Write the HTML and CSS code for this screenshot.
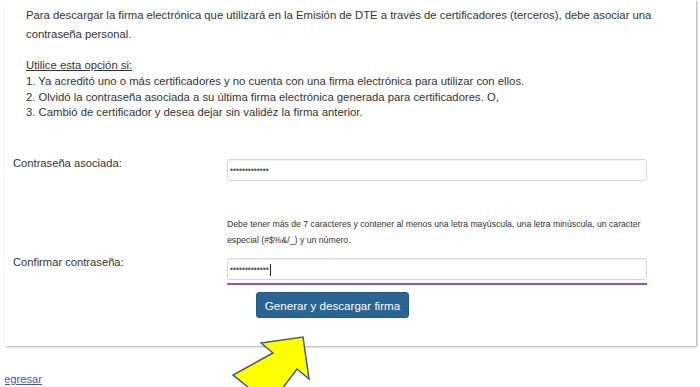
FILE: index.html
```html
<!DOCTYPE html>
<html lang="es">
<head>
<meta charset="utf-8">
<link rel="stylesheet" href="styles.css">
</head>
<body>
<div class="card">
  <div class="intro">
    <p class="lead">Para descargar la firma electrónica que utilizará en la Emisión de DTE a través de certificadores (terceros), debe asociar una contraseña personal.</p>
    <p class="opts"><span class="u">Utilice esta opción si:</span><br>1. Ya acreditó uno o más certificadores y no cuenta con una firma electrónica para utilizar con ellos.<br>2. Olvidó la contraseña asociada a su última firma electrónica generada para certificadores. O,<br>3. Cambió de certificador y desea dejar sin validéz la firma anterior.</p>
  </div>
  <div class="form">
    <div class="row r1">
      <label class="lbl">Contraseña asociada:</label>
      <div class="field"><div class="input">•••••••••••••</div></div>
    </div>
    <div class="help">Debe tener más de 7 caracteres y contener al menos una letra mayúscula, una letra minúscula, un caracter especial (#$%&amp;/_) y un número.</div>
    <div class="row r2">
      <label class="lbl">Confirmar contraseña:</label>
      <div class="field"><div class="input focus">•••••••••••••<span class="caret"></span></div></div>
    </div>
    <div class="actions"><button class="btn">Generar y descargar firma</button></div>
  </div>
</div>
<div class="back-wrap"><a class="back" href="#">Regresar</a></div>
<svg class="arrow" width="700" height="387" viewBox="0 0 700 387">
  <polygon points="303,337 309,379 297,369 270,405 233,375 273,353 261,343" fill="#ffff00" stroke="#3f5a86" stroke-width="1.5" stroke-linejoin="miter"/>
</svg>
</body>
</html>
```
FILE: styles.css
```css
html, body { margin: 0; padding: 0; background: #fff; }
body {
  font-family: "Liberation Sans", Arial, sans-serif;
  color: #333;
  width: 700px;
  height: 387px;
  overflow: hidden;
  position: relative;
}
.card {
  margin-left: 5px;
  width: 691px;
  height: 346px;
  background: #fff;
  box-shadow: 1px 1px 2px rgba(0,0,0,0.35);
  box-sizing: border-box;
}
.intro { padding: 6px 0 0 21px; font-size: 11.3px; line-height: 16px; }
.intro p { margin: 0; }
.lead { line-height: 19px; }
.opts { margin-top: 14px !important; line-height: 15.8px; }
.u { text-decoration: underline; }
.form { padding: 38px 0 0 8px; }
.row { display: flex; align-items: flex-start; }
.lbl { width: 214px; font-size: 11.2px; line-height: 16px; }
.field { width: 420px; }
.input {
  height: 22px;
  box-sizing: border-box;
  border: 1px solid #d6d6d6;
  border-radius: 3px;
  font-size: 8.5px;
  line-height: 20px;
  padding-left: 2px;
  color: #555;
  letter-spacing: 0;
  box-shadow: inset 0 1px 1px rgba(0,0,0,0.04);
}
.r1 .lbl { margin-top: -4px; }
.help {
  margin: 35px 0 0 214px;
  font-size: 8.7px;
  line-height: 16px;
  color: #333;
  width: 430px;
}
.r2 { margin-top: 10px; }
.r2 .lbl { margin-top: -4px; }
.focus { position: relative; margin-bottom: 5px; }
.focus::after {
  content: "";
  position: absolute;
  left: -1px; right: -1px; bottom: -6px;
  height: 2px;
  background: #8257d6;
}
.caret { display: inline-block; width: 1px; height: 12px; background: #222; vertical-align: middle; margin-left: 1px; }
.actions { padding: 7px 0 0 243px; }
.btn {
  width: 153px;
  height: 26px;
  background: #2b6593;
  color: #fff;
  border: 1px solid #255a84;
  border-radius: 3px;
  font-family: "Liberation Sans", Arial, sans-serif;
  font-size: 11.6px;
  padding: 0;
}
.back-wrap {
  margin: 23px 0 0 5px;
  overflow: hidden;
  width: 200px;
}
.back {
  display: inline-block;
  margin-left: -9px;
  font-size: 11.2px;
  color: #3b55d6;
  text-decoration: underline;
}
.arrow { position: absolute; left: 0; top: 0; pointer-events: none; }
```
